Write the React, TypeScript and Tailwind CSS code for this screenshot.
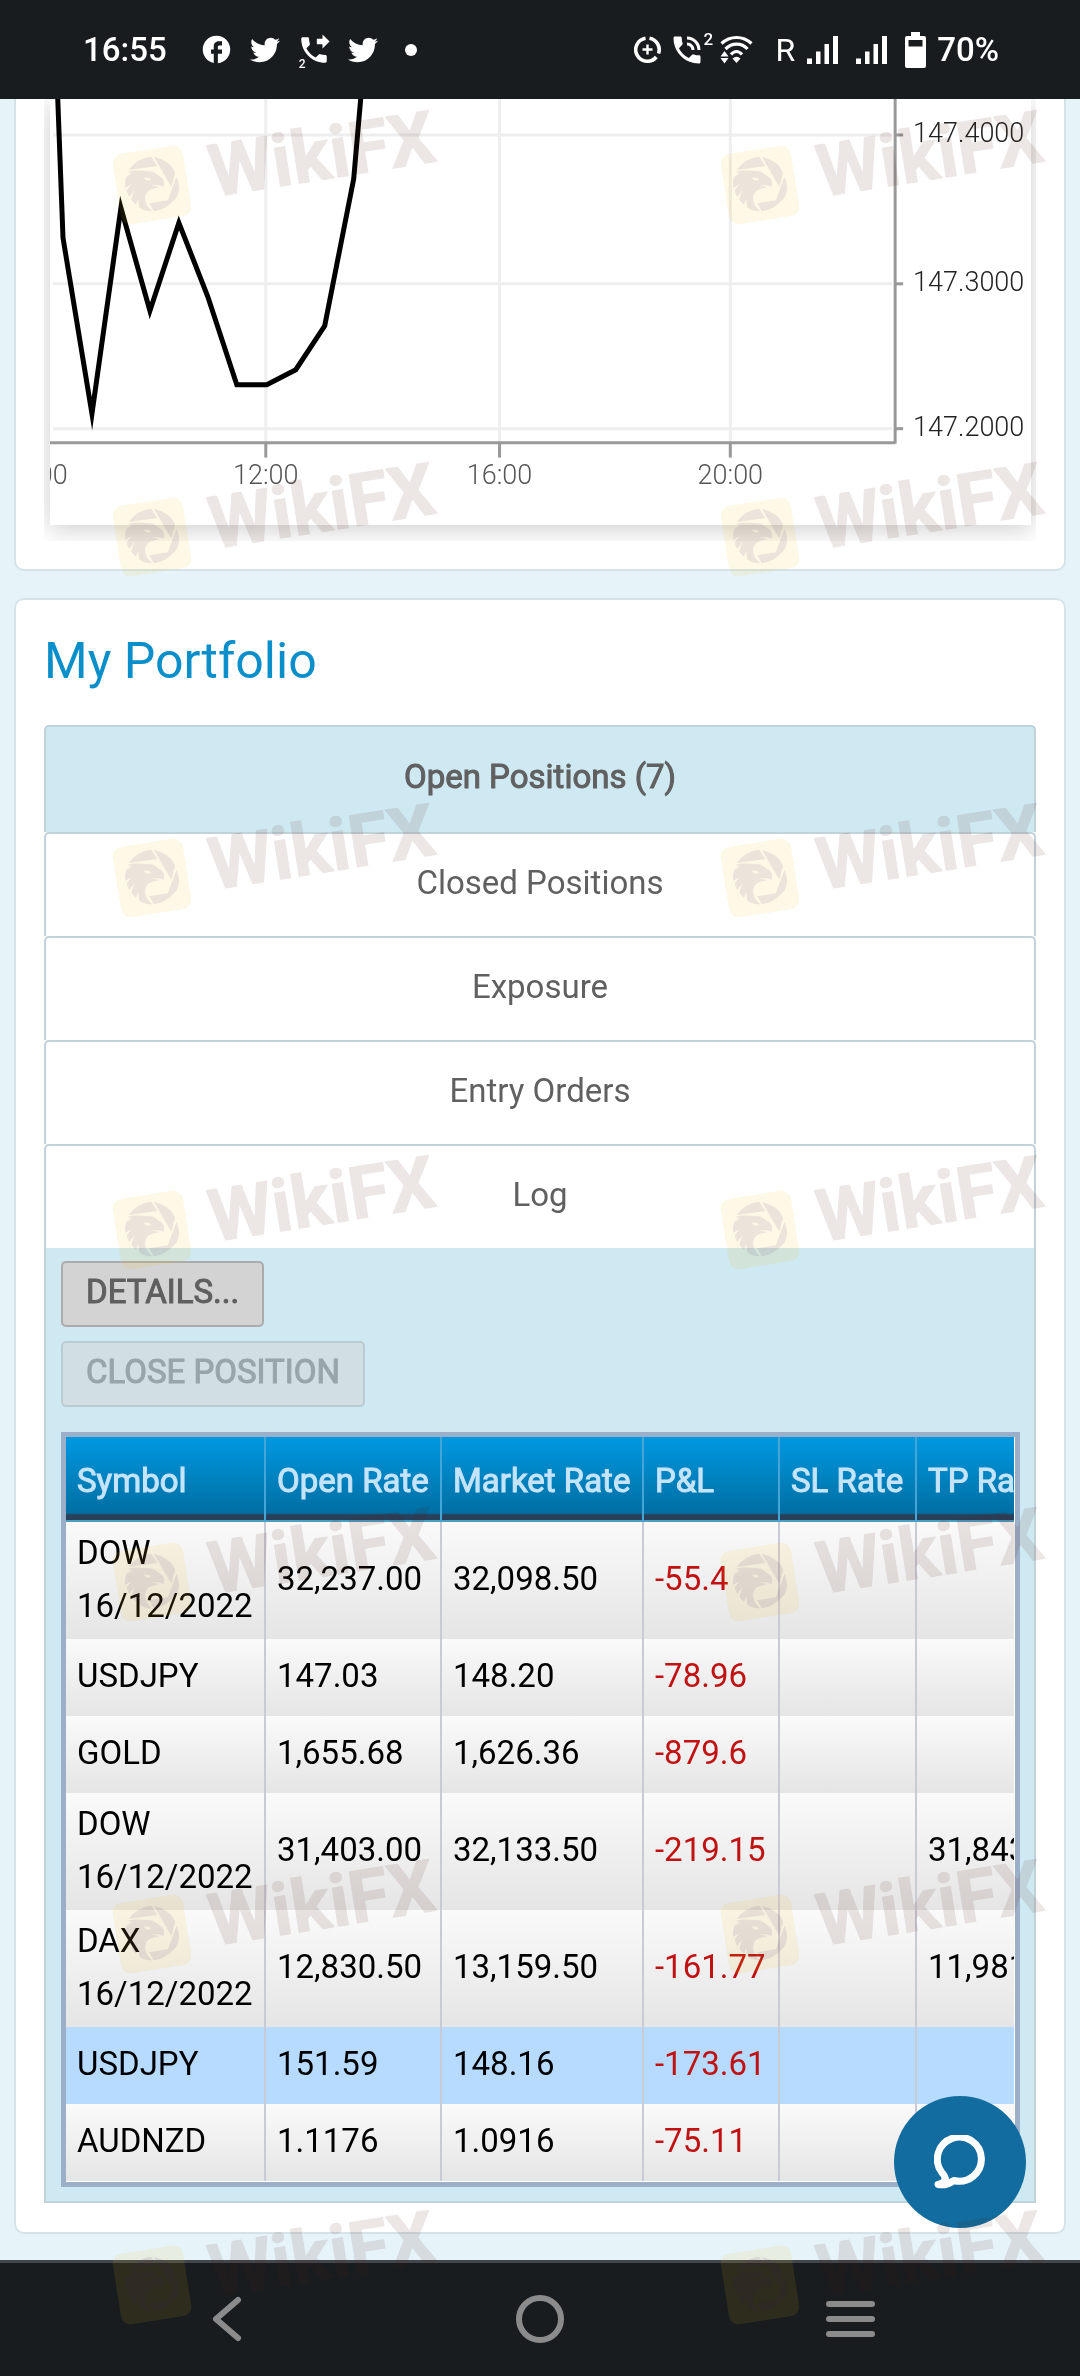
import React from "react";
import { FaTwitter } from "react-icons/fa";
import { MdFacebook, MdPhoneForwarded, MdPhoneInTalk } from "react-icons/md";

const AXIS = "#999999";
const GRID = "#eeeeee";

function DataSaverIcon() {
  return (
    <svg viewBox="0 0 27 27" className="h-[27px] w-[27px]" fill="none" stroke="#fff">
      <path d="M15.5 2.2A11.6 11.6 0 0 1 24.5 17.5M22.3 21A11.6 11.6 0 1 1 11.5 2.2" strokeWidth="3.6" />
      <path d="M13.5 8.5v10M8.5 13.5h10" strokeWidth="2.4" />
    </svg>
  );
}

function WifiIcon() {
  return (
    <svg viewBox="0 0 33 29" className="h-[29px] w-[33px]" fill="none" stroke="#fff" strokeWidth="3.2">
      <path d="M1.5 8.5C10 .5 23 .5 31.5 8.5" />
      <path d="M5.5 14C12 7.5 21.500 7.500 27.500 14" />
      <path d="M11 19.500C14.500 15.500 18.500 15.500 22 19.500" />
      <path d="M16.500 28l-4-4.500q4-3.500 8 0z" fill="#fff" stroke="none" />
      <path d="M4.500 16l4 5.500h-8zM4.500 28.500l4-5.500h-8z" fill="#fff" stroke="none" />
    </svg>
  );
}

function SignalIcon() {
  return (
    <svg viewBox="0 0 31 28" className="h-7 w-[31px]" fill="#fff">
      <path d="M0 22.500h5V28H0zM9 15.500h4.500V28H9zM17.500 8H22v20h-4.500zM26 0h5v28h-5z" />
    </svg>
  );
}

function BatteryIcon() {
  return (
    <svg viewBox="0 0 21 36" className="h-9 w-[21px]">
      <path d="M6 0h9v4h4a2 2 0 0 1 2 2v28a2 2 0 0 1-2 2H2a2 2 0 0 1-2-2V6a2 2 0 0 1 2-2h4z" fill="#fff" />
      <path d="M3.500 8h14v6.500h-14z" fill="#181c1f" />
    </svg>
  );
}

function StatusBar() {
  return (
    <header className="flex h-[99px] shrink-0 items-center justify-between bg-[#181c1f] pr-[81px] pl-[83px] text-[33px] font-medium text-white">
      <div className="flex items-center gap-[17px]">
        <time className="mr-4">16:55</time>
        <MdFacebook size={33} />
        <FaTwitter size={30} />
        <span className="relative">
          <MdPhoneForwarded size={34} />
          <span className="absolute -bottom-1 left-0.5 text-[12px] leading-[14px]">2</span>
        </span>
        <FaTwitter size={30} />
        <span className="ml-2.5 h-3 w-3 rounded-full bg-white" />
      </div>
      <div className="flex items-center">
        <DataSaverIcon />
        <span className="relative mr-[15px] ml-2">
          <MdPhoneInTalk size={36} />
          <span className="absolute -top-0.5 left-[34px] text-[17px] leading-[18px]">2</span>
        </span>
        <WifiIcon />
        <span className="mr-3 ml-[22px] text-[32px] font-normal">R</span>
        <SignalIcon />
        <span className="w-[18px]" />
        <SignalIcon />
        <span className="w-[18px]" />
        <BatteryIcon />
        <span className="ml-[11px]">70%</span>
      </div>
    </header>
  );
}

const rates = [
  { label: "147.4000", y: 36 },
  { label: "147.3000", y: 185 },
  { label: "147.2000", y: 330 },
];
const hours = [
  { label: "08:00", x: -15 },
  { label: "12:00", x: 216 },
  { label: "16:00", x: 450 },
  { label: "20:00", x: 681 },
];

function RateChart() {
  return (
    <svg viewBox="0 0 982 426" className="block w-full bg-white shadow-[0_4px_24px_rgba(0,0,0,0.2)]">
      {rates.map((r) => (
        <g key={r.label}>
          <path d={`M3 ${r.y}H843`} stroke={GRID} strokeWidth="3" />
          <path d={`M846 ${r.y}H854`} stroke={AXIS} strokeWidth="3" />
          <text x="864" y={r.y + 7} fontSize="27" fontWeight="300" fill="#222">
            {r.label}
          </text>
        </g>
      ))}
      {hours.map((h) => (
        <g key={h.label}>
          <path d={`M${h.x} 0V344`} stroke={GRID} strokeWidth="3" />
          <path d={`M${h.x} 344V359`} stroke={AXIS} strokeWidth="3" />
          <text x={h.x} y="385" fontSize="27" fontWeight="300" fill="#555" textAnchor="middle">
            {h.label}
          </text>
        </g>
      ))}
      <path d="M0 344H846M846 0V345" stroke={AXIS} strokeWidth="3" fill="none" />
      <path
        d="M7 -20L13 139L42 315L71 109L100 212L129 124L158 198L187 286H217L246 271L275 227L304 80L311 0L312 -20"
        fill="none"
        stroke="#000"
        strokeWidth="5"
        strokeMiterlimit="12"
      />
    </svg>
  );
}

const tabs = ["Closed Positions", "Exposure", "Entry Orders", "Log"];

const tabBase =
  "block w-full rounded-t-[5px] border-2 border-b-0 border-[#c0d3da] text-[33px] text-[#606060]";

const positions = [
  { symbol: "DOW 16/12/2022", open: "32,237.00", market: "32,098.50", pl: "-55.4", tp: "" },
  { symbol: "USDJPY", open: "147.03", market: "148.20", pl: "-78.96", tp: "" },
  { symbol: "GOLD", open: "1,655.68", market: "1,626.36", pl: "-879.6", tp: "" },
  { symbol: "DOW 16/12/2022", open: "31,403.00", market: "32,133.50", pl: "-219.15", tp: "31,843" },
  { symbol: "DAX 16/12/2022", open: "12,830.50", market: "13,159.50", pl: "-161.77", tp: "11,981" },
  { symbol: "USDJPY", open: "151.59", market: "148.16", pl: "-173.61", tp: "", selected: true },
  { symbol: "AUDNZD", open: "1.1176", market: "1.0916", pl: "-75.11", tp: "" },
];

const headings = ["Symbol", "Open Rate", "Market Rate", "P&L", "SL Rate", "TP Rate"];
const cell = "border-r-2 border-[#c8cad8] pt-1 pr-0 pb-[7px] pl-[11px] align-middle";

function PositionsTable() {
  return (
    <div className="mt-[25px] border-[5px] border-[#9bafc9] bg-white pr-px pb-px">
      <div className="overflow-x-auto [scrollbar-width:none]">
        <table className="w-[991px] table-fixed border-separate border-spacing-0 text-left text-[33px] leading-[53px]">
          <colgroup>
            <col className="w-[200px]" />
            <col className="w-[176px]" />
            <col className="w-[202px]" />
            <col className="w-[136px]" />
            <col className="w-[137px]" />
            <col className="w-[140px]" />
          </colgroup>
          <thead>
            <tr className="h-[85px]">
              {headings.map((h) => (
                <th
                  key={h}
                  scope="col"
                  className="border-r-2 border-[#45a5d6] bg-[linear-gradient(#0098e1_0px,#006fa3_76px,#29405a_78px,#29405a_83px,#4e9cc0_83px)] p-0 pt-0.5 pl-[11px] font-normal whitespace-nowrap text-[#c5e4f9] [-webkit-text-stroke:1px]"
                >
                  {h}
                </th>
              ))}
            </tr>
          </thead>
          <tbody className="text-black">
            {positions.map((p, i) => (
              <tr
                key={i}
                className={
                  p.selected
                    ? "h-[77px] bg-[#b7daff]"
                    : "h-[77px] bg-linear-to-b from-[#fafafa] to-[#e5e5e5]"
                }
              >
                <td className={cell}>{p.symbol}</td>
                <td className={cell}>{p.open}</td>
                <td className={cell}>{p.market}</td>
                <td className={cell}>
                  <span className="text-[#c01212]">{p.pl}</span>
                </td>
                <td className={cell}></td>
                <td className={cell}>{p.tp}</td>
              </tr>
            ))}
          </tbody>
        </table>
      </div>
    </div>
  );
}

function Portfolio() {
  return (
    <section className="mx-3.5 mt-[27px] rounded-[10px] border-2 border-[#d5e3e8] bg-white px-[28px] pt-[31px] pb-[29px]">
      <h2 className="mb-[34px] text-[50px] leading-[60px] text-[#0b8fcb]">My Portfolio</h2>
      <div role="tablist">
        <button
          role="tab"
          aria-selected="true"
          className={`${tabBase} h-[107px] bg-[#cfe9f2] pb-1 [-webkit-text-stroke:1px]`}
        >
          Open Positions (7)
        </button>
        {tabs.map((t) => (
          <button key={t} role="tab" aria-selected="false" className={`${tabBase} h-[104px] bg-white pb-1`}>
            {t}
          </button>
        ))}
      </div>
      <div role="tabpanel" className="border-2 border-t-0 border-[#c0d3da] bg-[#cfe9f2] pt-[13px] pr-3.5 pb-3.5 pl-[15px]">
        <div className="flex flex-col items-start gap-3.5">
          <button className="h-[66px] rounded-[5px] border-2 border-[#ababab] bg-[#d3d3d3] px-[23px] pb-1 text-[33px] text-[#5f5f5f] [-webkit-text-stroke:1px]">
            DETAILS...
          </button>
          <button
            disabled
            className="h-[66px] rounded-[5px] border-2 border-[#bccbd2] bg-[#d1dee3] px-[23px] pb-1 text-[33px] text-[#98a5aa] [-webkit-text-stroke:1px]"
          >
            CLOSE POSITION
          </button>
        </div>
        <PositionsTable />
      </div>
    </section>
  );
}

function NavBar() {
  return (
    <nav className="mt-[26px] grid h-[116px] grid-cols-3 items-center border-t-[3px] border-[#41474d] bg-[#181c1f] px-[74px] text-[#8b8b8b]">
      <button aria-label="Back" className="justify-self-center">
        <svg viewBox="0 0 30 46" className="mr-1 h-[46px] w-[30px]" fill="none" stroke="currentColor" strokeWidth="6" strokeLinecap="round" strokeLinejoin="round">
          <path d="M26 4L4 23L26 42" />
        </svg>
      </button>
      <button aria-label="Home" className="h-12 w-12 justify-self-center rounded-full border-[6px] border-[#8b8b8b]" />
      <button aria-label="Recent apps" className="flex w-[49px] flex-col gap-[9px] justify-self-center">
        <span className="h-1.5 rounded-full bg-[#8b8b8b]" />
        <span className="h-1.5 rounded-full bg-[#8b8b8b]" />
        <span className="h-1.5 rounded-full bg-[#8b8b8b]" />
      </button>
    </nav>
  );
}

function Watermark() {
  return (
    <svg viewBox="0 0 332 120" className="w-[332px]">
      <g opacity="0.1">
        <rect x="6.500" y="41.500" width="71" height="71" rx="9" fill="#f2b810" transform="rotate(-9 42 77)" />
      </g>
      <svg x="2" y="36" width="81" height="81" viewBox="324 432 236 243" preserveAspectRatio="none">
        <g opacity="0.09" fill="#3a1a6a">
          <path d="M373 510Q398 474 438 470L456 498Z" />
          <path d="M446 471Q494 482 508 518L497 560Z" />
          <path d="M512 530Q528 570 508 598L484 608Z" />
          <path d="M432 610L508 597Q480 630 446 634Z" />
          <path
            fillRule="evenodd"
            d="M370 516C392 508 412 514 430 513C448 514 458 526 468 532C476 540 477 550 474 562C466 555 452 556 438 556L462 562C448 566 434 566 425 578C416 592 420 616 441 634C422 634 410 628 403 621L400 596L394 614Q384 606 380 598L390 570L374 592Q368 580 367 570L382 552L363 564Q360 540 366 530L382 520ZM418 532L438 536Q434 545 422 541Z"
          />
        </g>
      </svg>
      <g opacity="0.11" fill="#531d16" stroke="#531d16" strokeWidth="1" strokeLinejoin="round">
        <text x="103" y="89" fontSize="73" fontWeight="700" transform="rotate(-9 103 89)">
          WikiFX
        </text>
      </g>
    </svg>
  );
}

const watermarkSpots = [
  "left-[110px] top-[108px]",
  "left-[718px] top-[108px]",
  "left-[110px] top-[460px]",
  "left-[718px] top-[460px]",
  "left-[110px] top-[801px]",
  "left-[718px] top-[801px]",
  "left-[110px] top-[1153px]",
  "left-[718px] top-[1153px]",
  "left-[110px] top-[1505px]",
  "left-[718px] top-[1505px]",
  "left-[110px] top-[1857px]",
  "left-[718px] top-[1857px]",
  "left-[110px] top-[2208px]",
  "left-[718px] top-[2208px]",
];

export default function App() {
  return (
    <div className="relative min-h-screen overflow-hidden bg-[#e6f3f9] font-[Roboto,sans-serif]">
      <StatusBar />
      <main>
        <section className="mx-3.5 rounded-b-[10px] border-2 border-t-0 border-[#d5e3e8] bg-white px-[28px] pb-[28px]">
          <div className="overflow-hidden pr-[5px] pb-4 pl-1.5">
            <RateChart />
          </div>
        </section>
        <Portfolio />
      </main>
      <NavBar />
      <button
        aria-label="Open chat"
        className="absolute right-[54px] bottom-[148px] flex h-[132px] w-[132px] items-center justify-center rounded-full bg-[#136c9f]"
      >
        <svg viewBox="0 0 52 54" className="h-[54px] w-[52px]" fill="none" stroke="#fff" strokeWidth="7" strokeLinejoin="round" strokeLinecap="round">
          <path d="M20 45.500A22 22 0 1 0 7.500 37Q11 41 11.500 44Q10 48 4 49.500Q12 51 20 45.500Z" />
        </svg>
      </button>
      <div aria-hidden="true" className="pointer-events-none">
        {watermarkSpots.map((spot) => (
          <div key={spot} className={`absolute ${spot}`}>
            <Watermark />
          </div>
        ))}
      </div>
    </div>
  );
}
